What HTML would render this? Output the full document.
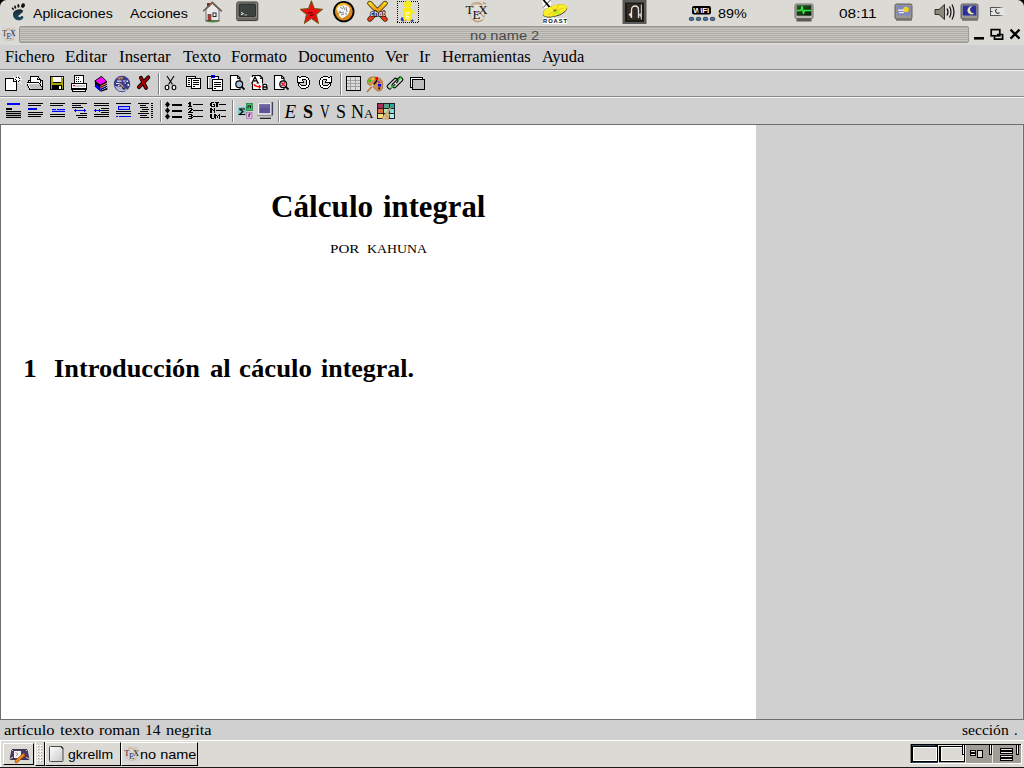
<!DOCTYPE html>
<html><head><meta charset="utf-8">
<style>
*{margin:0;padding:0;box-sizing:border-box}
html,body{width:1024px;height:768px;overflow:hidden;background:#dcdad5;position:relative}
.a{position:absolute}
.sans{font-family:"Liberation Sans",sans-serif}
.serif{font-family:"Liberation Serif",serif}
svg{position:absolute;overflow:visible}
</style></head><body>
<!-- top panel -->
<div id="panel" class="a" style="left:0;top:0;width:1024px;height:25px;background:#dcdad5"></div>






<div class="a" style="left:32.80px;top:-11.00px;font:13px 'Liberation Sans',sans-serif;line-height:50px;white-space:pre;color:#000;transform:scaleX(1.0924);transform-origin:0 0">Aplicaciones</div>
<div class="a" style="left:130.00px;top:-11.00px;font:13px 'Liberation Sans',sans-serif;line-height:50px;white-space:pre;color:#000;transform:scaleX(1.0986);transform-origin:0 0">Acciones</div>
<div class="a" style="left:718.05px;top:-11.00px;font:13px 'Liberation Sans',sans-serif;line-height:50px;white-space:pre;color:#000;transform:scaleX(1.1040);transform-origin:0 0">89%</div>
<div class="a" style="left:839.21px;top:-11.00px;font:13px 'Liberation Sans',sans-serif;line-height:50px;white-space:pre;color:#000;transform:scaleX(1.1869);transform-origin:0 0">08:11</div>
<!-- corners -->
<svg class="a" style="left:0;top:0" width="8" height="8"><path d="M0 0H6.5A6.5 6.5 0 0 0 0 6.5Z" fill="#000"/></svg>
<svg class="a" style="left:1016px;top:0" width="8" height="8"><path d="M8 0H1.5A6.5 6.5 0 0 1 8 6.5Z" fill="#000"/></svg>
<!-- gnome foot -->
<svg class="a" style="left:0;top:0" width="30" height="24">
<defs><linearGradient id="gf" x1="0" y1="0" x2="0" y2="1"><stop offset="0" stop-color="#1f2a30"/><stop offset="1" stop-color="#1c4a62"/></linearGradient></defs>
<g fill="#fff" opacity="0.6" transform="translate(0,0.5)"></g>
<path d="M19.3 9.2C21.6 9 23.4 10 23 11.4C22.6 12.8 19.6 14.2 18.6 15.6C18 16.6 18.8 17.4 20 17C20.9 16.6 21.6 15.9 22.4 16C23.6 16.2 23.6 17.8 22.7 18.7C21.6 19.8 20 20.3 18.5 20.2C15.4 20 13 17.6 13 14.4C13 11.4 15.8 9.4 19.3 9.2Z" fill="url(#gf)"/>
<ellipse cx="12.9" cy="8.7" rx="0.9" ry="1.4" transform="rotate(-35 12.9 8.7)" fill="#111"/>
<ellipse cx="15.2" cy="7.1" rx="0.95" ry="1.6" transform="rotate(-20 15.2 7.1)" fill="#111"/>
<ellipse cx="18.4" cy="5.9" rx="1.05" ry="1.8" transform="rotate(-8 18.4 5.9)" fill="#111"/>
<ellipse cx="23" cy="5.6" rx="1.9" ry="2.3" transform="rotate(30 23 5.6)" fill="#111"/>
</svg>
<!-- house -->
<svg class="a" style="left:200px;top:0" width="26" height="24">
<ellipse cx="212.5" cy="20.8" rx="7.5" ry="1.6" fill="#4f8a3a" transform="translate(-200,0)"/>
<rect x="7" y="3" width="3" height="4" fill="#8a2a20"/>
<path d="M6 9.5L12.3 3.5L19 9.5V20.5H6Z" fill="#e8e8e8" stroke="#555" stroke-width="0.8"/>
<path d="M3.2 11.2L12.3 2.3L21.8 11.3" fill="none" stroke="#6b5a48" stroke-width="1.6"/>
<rect x="8" y="14.5" width="3" height="6" fill="#c03a30" stroke="#333" stroke-width="0.6"/>
<rect x="12.5" y="12.5" width="4" height="4.5" fill="#222"/><rect x="13.5" y="13.5" width="2" height="2.5" fill="#fff"/>
</svg>
<!-- terminal -->
<svg class="a" style="left:236px;top:1px" width="24" height="22">
<rect x="0.8" y="1" width="21" height="18.6" rx="1.5" fill="#8c887f" stroke="#3a3834" stroke-width="1"/>
<rect x="3" y="3" width="16.5" height="12.5" rx="0.8" fill="#3c423e" stroke="#1f221f" stroke-width="0.8"/>
<path d="M5 11.5L7.5 12.7L5 13.8" fill="none" stroke="#eee" stroke-width="1"/>
<path d="M8.5 14H11" stroke="#ddd" stroke-width="0.8"/>
<rect x="2" y="16.5" width="19" height="2.5" fill="#6d6a63"/>
</svg>
<!-- star -->
<svg class="a" style="left:298px;top:0" width="28" height="26">
<path d="M13.4 0.7L16.3 8.6L24.6 9.3L18.3 14.5L20.5 23.5L13.4 18.6L6.3 23.5L8.5 14.5L2 9.3L10.5 8.6Z" fill="#e81010" stroke="#6a5a10" stroke-width="1"/>
<path d="M10 13C11.5 12 13 13.5 14.5 12.5M12 15.5C13.5 15.5 15 14 16 15" stroke="#400" stroke-width="1" fill="none"/>
</svg>
<!-- ball -->
<svg class="a" style="left:332px;top:0" width="24" height="24">
<circle cx="11.8" cy="11.6" r="9.8" fill="#d88818" stroke="#000" stroke-width="1.8"/>
<circle cx="10.8" cy="9.2" r="6.5" fill="#f4c030" opacity="0.8"/>
<path d="M4.5 9L7.5 5.5L10 6L12 4.5L16.5 6.5L18 9L16.5 14L13.5 16.5L10 18.5L7 16L6.5 12.5Z" fill="#f4f4f4"/>
<path d="M8 7L11 9M11 6L13 10M14 7L15 12M7 11L10 13L12 12M9 15L12 14M13 13L15 14.5M6.5 13.5L9 12" stroke="#555" stroke-width="0.7" fill="none"/>
</svg>
<!-- xchat -->
<svg class="a" style="left:366px;top:0" width="26" height="24">
<defs><linearGradient id="xc" x1="0" y1="0" x2="0" y2="1"><stop offset="0" stop-color="#f8d818"/><stop offset="0.55" stop-color="#f08810"/><stop offset="0.56" stop-color="#f05010"/><stop offset="1" stop-color="#e83818"/></linearGradient></defs>
<path d="M3.8 3.3L19.2 19.2M19.2 3.3L3.8 19.2" stroke="#3a2a10" stroke-width="5" stroke-linecap="round"/>
<path d="M3.8 3.3L19.2 19.2M19.2 3.3L3.8 19.2" stroke="url(#xc)" stroke-width="3.4" stroke-linecap="round"/>
<text x="11.8" y="15.6" font-family="Liberation Sans" font-size="6.5" font-weight="bold" text-anchor="middle" fill="#f4f4f4" stroke="#111" stroke-width="1.3" paint-order="stroke" letter-spacing="0.4">chat</text>
</svg>
<!-- gaim dotted -->
<svg class="a" style="left:396px;top:0" width="26" height="25">
<g fill="#000" shape-rendering="crispEdges"><rect x="1" y="1" width="1" height="1"/><rect x="1" y="22" width="1" height="1"/><rect x="3" y="1" width="1" height="1"/><rect x="3" y="22" width="1" height="1"/><rect x="5" y="1" width="1" height="1"/><rect x="5" y="22" width="1" height="1"/><rect x="7" y="1" width="1" height="1"/><rect x="7" y="22" width="1" height="1"/><rect x="9" y="1" width="1" height="1"/><rect x="9" y="22" width="1" height="1"/><rect x="11" y="1" width="1" height="1"/><rect x="11" y="22" width="1" height="1"/><rect x="13" y="1" width="1" height="1"/><rect x="13" y="22" width="1" height="1"/><rect x="15" y="1" width="1" height="1"/><rect x="15" y="22" width="1" height="1"/><rect x="17" y="1" width="1" height="1"/><rect x="17" y="22" width="1" height="1"/><rect x="19" y="1" width="1" height="1"/><rect x="19" y="22" width="1" height="1"/><rect x="21" y="1" width="1" height="1"/><rect x="21" y="22" width="1" height="1"/><rect x="1" y="3" width="1" height="1"/><rect x="22" y="3" width="1" height="1"/><rect x="1" y="5" width="1" height="1"/><rect x="22" y="5" width="1" height="1"/><rect x="1" y="7" width="1" height="1"/><rect x="22" y="7" width="1" height="1"/><rect x="1" y="9" width="1" height="1"/><rect x="22" y="9" width="1" height="1"/><rect x="1" y="11" width="1" height="1"/><rect x="22" y="11" width="1" height="1"/><rect x="1" y="13" width="1" height="1"/><rect x="22" y="13" width="1" height="1"/><rect x="1" y="15" width="1" height="1"/><rect x="22" y="15" width="1" height="1"/><rect x="1" y="17" width="1" height="1"/><rect x="22" y="17" width="1" height="1"/><rect x="1" y="19" width="1" height="1"/><rect x="22" y="19" width="1" height="1"/><rect x="1" y="21" width="1" height="1"/><rect x="22" y="21" width="1" height="1"/></g>
<path d="M5.5 17.5C4 19 4.5 21 7 21.5L10.5 20.5L9 17Z" fill="#2838c8"/>
<path d="M13 20.5L16.5 22L18 20.5L15 18.5Z" fill="#2838c8"/>
<circle cx="11.8" cy="4.3" r="3.6" fill="#f8ec10"/>
<path d="M7.5 8H15.5L16.5 10.5L19.5 12.5L18.5 13.5L16 12.5V19.5L13.5 21.5L11 19.5L8 21.5L7 17Z" fill="#f8ec10"/>
<text x="11.8" y="16.8" font-family="Liberation Serif" font-size="10" text-anchor="middle" fill="#fff">g</text>
</svg>
<!-- tex -->
<svg class="a" style="left:464px;top:0" width="28" height="25">
<ellipse cx="13.5" cy="13" rx="7.5" ry="9" fill="#e4e0dc" stroke="#b8b0a8" stroke-width="0.8"/>
<path d="M7 5C10 2 15 2 18 4.5M19 2.5L22 4M9 19C11 22 16 22.5 19 19.5M17 14L20 17" stroke="#c8a078" stroke-width="1.4" fill="none"/>
<text x="1.5" y="13.5" font-family="Liberation Serif" font-size="13" fill="#111">T</text>
<text x="8.5" y="18.5" font-family="Liberation Serif" font-size="13" fill="#111">E</text>
<text x="14.2" y="13.5" font-family="Liberation Serif" font-size="13" fill="#111">X</text>
<rect x="12" y="11" width="2" height="2" fill="#8a80e0"/>
</svg>
<!-- xroast -->
<svg class="a" style="left:538px;top:0" width="34" height="26">
<rect x="4.7" y="0" width="8.3" height="8" fill="#fff"/>
<path d="M5.5 0L12 7.6" stroke="#000" stroke-width="1.8"/>
<path d="M5 7.6L12.6 0" stroke="#000" stroke-width="0.8"/>
<ellipse cx="17" cy="11" rx="12.6" ry="5.6" transform="rotate(-17 17 11)" fill="#2a2a30"/>
<ellipse cx="17" cy="10.5" rx="12.4" ry="5.3" transform="rotate(-17 17 10.5)" fill="#f8f028"/>
<path d="M17 10.5L12 5.5M17 10.5L21 4.5M17 10.5L26 8M17 10.5L10 14.5M17 10.5L15 16M17 10.5L24 14" stroke="#f0b818" stroke-width="1" opacity="0.8"/>
<ellipse cx="19.5" cy="12.5" rx="3" ry="2" fill="#c8f020"/>
<ellipse cx="17" cy="10.5" rx="1.6" ry="0.9" fill="#707040"/>
<rect x="5" y="18" width="24" height="6" fill="#fff"/>
<text x="17.5" y="23.2" font-family="Liberation Sans" font-size="5.8" font-weight="bold" text-anchor="middle" fill="#111" letter-spacing="0.9">ROAST</text>
</svg>
<!-- dark square app -->
<svg class="a" style="left:622px;top:0" width="26" height="25">
<rect x="0.5" y="0" width="24" height="24" fill="#5a5a5a"/>
<rect x="3" y="2.5" width="19" height="19.5" fill="#1e1a14"/>
<rect x="5" y="4" width="15" height="16" fill="#3a3028" opacity="0.7"/>
<path d="M6.5 14.5L9.5 12V18Z" fill="#ddd"/>
<path d="M9.5 18V10C9.5 7 11 6 13 6C15 6 16.5 7 16.5 10V18" fill="none" stroke="#e0e0e0" stroke-width="1.3"/>
<path d="M16.5 14.5L19.5 13V18" fill="#ccc"/>
<rect x="18.8" y="4.5" width="1.2" height="15" fill="#bbb"/>
</svg>
<!-- wifi -->
<svg class="a" style="left:688px;top:4px" width="30" height="18">
<rect x="4" y="2" width="19" height="8.6" rx="2" fill="#000"/>
<text x="5.2" y="9.3" font-family="Liberation Sans" font-size="8" font-weight="bold" fill="#fff" letter-spacing="-0.3">WiFi</text>
<rect x="10.5" y="3" width="2" height="6.5" fill="#000"/>
<g fill="#4a7aa8" stroke="#1a2a3a" stroke-width="0.8"><rect x="1.4" y="13.4" width="4.2" height="3" rx="1"/><rect x="8.4" y="13.4" width="4.2" height="3" rx="1"/><rect x="15.4" y="13.4" width="4.2" height="3" rx="1"/><rect x="22.4" y="13.4" width="4.2" height="3" rx="1"/></g>
</svg>
<!-- sysmon -->
<svg class="a" style="left:794px;top:3px" width="22" height="20">
<defs><linearGradient id="smg" x1="0" y1="0" x2="1" y2="1"><stop offset="0" stop-color="#2a5a2a"/><stop offset="1" stop-color="#0a1a0a"/></linearGradient></defs>
<rect x="1" y="1" width="18" height="14.5" rx="1.5" fill="#b8b6ae" stroke="#555" stroke-width="0.8"/>
<rect x="2.6" y="2.2" width="14.8" height="10.5" fill="url(#smg)"/>
<path d="M2.8 7.5H7L8.2 3L9.4 11L10.5 7.5H17.3" stroke="#30f040" stroke-width="1.3" fill="none"/>
<rect x="2.5" y="15.5" width="15" height="3" fill="#5a5854"/>
</svg>
<!-- weather monitor -->
<svg class="a" style="left:894px;top:3px" width="22" height="20">
<rect x="1" y="1" width="17" height="15" rx="1.5" fill="#9a9890" stroke="#444" stroke-width="0.8"/>
<rect x="2.8" y="2.5" width="13.5" height="10" fill="#8088c0"/>
<circle cx="12" cy="6.5" r="2.8" fill="#f0d020"/>
<rect x="4" y="6.5" width="6" height="1.4" fill="#eee"/><rect x="5" y="9" width="5" height="1.2" fill="#eee"/>
<rect x="2" y="16" width="16" height="2" fill="#555" opacity="0.6"/>
</svg>
<!-- speaker -->
<svg class="a" style="left:933px;top:2px" width="24" height="20">
<path d="M2 7.5H6L11.5 2.5V17.5L6 12.5H2Z" fill="#8a8878" stroke="#222" stroke-width="0.9"/>
<path d="M14 6.5Q16 10 14 13.5M16.5 4.5Q19.5 10 16.5 15.5M19 2.5Q23 10 19 17.5" fill="none" stroke="#111" stroke-width="1.2"/>
</svg>
<!-- moon monitor -->
<svg class="a" style="left:960px;top:3px" width="22" height="20">
<rect x="1" y="1" width="17" height="15" rx="1.5" fill="#9a9890" stroke="#444" stroke-width="0.8"/>
<rect x="2.8" y="2.5" width="13.5" height="10" fill="#2a30a0"/>
<path d="M12.5 3.5A4 4 0 1 0 14.5 10A3.2 3.2 0 1 1 12.5 3.5Z" fill="#f0e8a0"/>
<rect x="2" y="16" width="16" height="2" fill="#555" opacity="0.6"/>
</svg>
<!-- tray small -->
<svg class="a" style="left:990px;top:7px" width="16" height="10">
<defs><linearGradient id="trf" x1="0" y1="0" x2="1" y2="0"><stop offset="0.6" stop-color="#555"/><stop offset="1" stop-color="#555" stop-opacity="0"/></linearGradient></defs>
<rect x="0" y="0" width="14.5" height="9" fill="#e4e4e4"/>
<rect x="0" y="0" width="14.5" height="1" fill="url(#trf)"/><rect x="0" y="8" width="14.5" height="1" fill="url(#trf)"/><rect x="0" y="0" width="1" height="9" fill="#555"/>
<path d="M1 4.5H2.5" stroke="#444" stroke-width="1"/>
<path d="M7 2.2C5.5 2.5 5 4 6 5C6.5 6 7.5 6.8 8.5 6.2L9.5 5.5" stroke="#4a4038" stroke-width="1.1" fill="none"/>
</svg>
<!-- title bar -->
<div id="stripes" class="a" style="left:19px;top:26px;width:950px;height:17px;border:1px solid #9c9991;border-radius:2px;background:repeating-linear-gradient(to bottom,#adaba5 0,#adaba5 1px,#c8c6c0 1px,#c8c6c0 2px)"></div>



<svg class="a" style="left:2px;top:27px" width="15" height="15">
<rect x="0" y="0" width="14" height="14" fill="#d6d6d8"/>
<ellipse cx="7" cy="8" rx="5" ry="5.5" fill="none" stroke="#c0b0a0" stroke-width="1" opacity="0.7"/>
<path d="M4 2.5C6 1.5 8 2 9.5 3M10.5 1.5L12.5 3M8.5 12C9.5 13 11 12.5 11.5 11" stroke="#d8b898" stroke-width="1.3" fill="none"/>
<text x="0.3" y="8.8" font-family="Liberation Serif" font-size="7.5" fill="#333">T</text>
<text x="4.6" y="11.6" font-family="Liberation Serif" font-size="7.5" fill="#333">E</text>
<text x="8.2" y="8.8" font-family="Liberation Serif" font-size="7.5" fill="#222">X</text>
<rect x="7.5" y="7.5" width="2" height="1.5" fill="#a8a0f0"/>
</svg>
<svg class="a" style="left:970px;top:26px" width="54" height="18">
<rect x="4" y="11" width="10" height="2.6" fill="#000"/>
<rect x="21.2" y="3.6" width="8.6" height="6.2" fill="none" stroke="#000" stroke-width="1.7"/>
<path d="M27 8.5H32.6V13.2H24.5V10" fill="none" stroke="#000" stroke-width="1.7"/>
<path d="M40.5 3.6L49.5 12.6M49.5 3.6L40.5 12.6" stroke="#000" stroke-width="2.2"/>
</svg>

<div class="a" style="left:469.62px;top:11.00px;font:12.5px 'Liberation Sans',sans-serif;line-height:50px;white-space:pre;color:#4a4a4a;transform:scaleX(1.1723);transform-origin:0 0">no name 2</div>
<!-- texmacs window -->
<div id="menu" class="a" style="left:0;top:45px;width:1024px;height:80px;background:#d0d0d0"></div>
<div class="a" style="left:0;top:69px;width:1024px;height:1px;background:#8a8a8a"></div>
<div class="a" style="left:0;top:70px;width:1024px;height:1px;background:#f4f4f4"></div>
<div class="a" style="left:0;top:96px;width:1024px;height:1px;background:#8a8a8a"></div>
<div class="a" style="left:0;top:97px;width:1024px;height:1px;background:#f4f4f4"></div>
<div class="a" style="left:0;top:124px;width:1024px;height:1px;background:#6e6e6e"></div>


<!-- toolbar1 separators -->
<div class="a" style="left:158px;top:73px;width:1px;height:22px;background:#808080"></div>
<div class="a" style="left:159px;top:73px;width:1px;height:22px;background:#fff"></div>
<div class="a" style="left:340px;top:73px;width:1px;height:22px;background:#808080"></div>
<div class="a" style="left:341px;top:73px;width:1px;height:22px;background:#fff"></div>
<!-- new -->
<svg class="a" style="left:4px;top:74px" width="20" height="18" shape-rendering="crispEdges"><rect x="13" y="1" width="1" height="1" fill="#fff"/><rect x="9" y="2" width="1" height="1" fill="#fff"/><rect x="13" y="2" width="1" height="1" fill="#fff"/><rect x="16" y="2" width="1" height="1" fill="#fff"/><rect x="10" y="3" width="1" height="1" fill="#fff"/><rect x="12" y="3" width="1" height="1" fill="#000"/><rect x="13" y="3" width="1" height="1" fill="#fff"/><rect x="14" y="3" width="1" height="1" fill="#000"/><rect x="16" y="3" width="1" height="1" fill="#fff"/><rect x="1" y="4" width="1" height="1" fill="#000"/><rect x="2" y="4" width="1" height="1" fill="#000"/><rect x="3" y="4" width="1" height="1" fill="#000"/><rect x="4" y="4" width="1" height="1" fill="#000"/><rect x="5" y="4" width="1" height="1" fill="#000"/><rect x="6" y="4" width="1" height="1" fill="#000"/><rect x="7" y="4" width="1" height="1" fill="#000"/><rect x="8" y="4" width="1" height="1" fill="#000"/><rect x="9" y="4" width="1" height="1" fill="#000"/><rect x="11" y="4" width="1" height="1" fill="#fff"/><rect x="12" y="4" width="1" height="1" fill="#fff"/><rect x="13" y="4" width="1" height="1" fill="#fff"/><rect x="14" y="4" width="1" height="1" fill="#fff"/><rect x="15" y="4" width="1" height="1" fill="#000"/><rect x="1" y="5" width="1" height="1" fill="#000"/><rect x="2" y="5" width="1" height="1" fill="#fff"/><rect x="3" y="5" width="1" height="1" fill="#fff"/><rect x="4" y="5" width="1" height="1" fill="#fff"/><rect x="5" y="5" width="1" height="1" fill="#fff"/><rect x="6" y="5" width="1" height="1" fill="#fff"/><rect x="7" y="5" width="1" height="1" fill="#fff"/><rect x="8" y="5" width="1" height="1" fill="#fff"/><rect x="9" y="5" width="1" height="1" fill="#000"/><rect x="10" y="5" width="1" height="1" fill="#fff"/><rect x="11" y="5" width="1" height="1" fill="#000"/><rect x="12" y="5" width="1" height="1" fill="#fff"/><rect x="13" y="5" width="1" height="1" fill="#fff"/><rect x="14" y="5" width="1" height="1" fill="#fff"/><rect x="15" y="5" width="1" height="1" fill="#fff"/><rect x="16" y="5" width="1" height="1" fill="#fff"/><rect x="17" y="5" width="1" height="1" fill="#fff"/><rect x="1" y="6" width="1" height="1" fill="#000"/><rect x="2" y="6" width="1" height="1" fill="#fff"/><rect x="3" y="6" width="1" height="1" fill="#fff"/><rect x="4" y="6" width="1" height="1" fill="#fff"/><rect x="5" y="6" width="1" height="1" fill="#fff"/><rect x="6" y="6" width="1" height="1" fill="#fff"/><rect x="7" y="6" width="1" height="1" fill="#fff"/><rect x="8" y="6" width="1" height="1" fill="#fff"/><rect x="9" y="6" width="1" height="1" fill="#000"/><rect x="10" y="6" width="1" height="1" fill="#fff"/><rect x="11" y="6" width="1" height="1" fill="#fff"/><rect x="12" y="6" width="1" height="1" fill="#000"/><rect x="13" y="6" width="1" height="1" fill="#fff"/><rect x="14" y="6" width="1" height="1" fill="#fff"/><rect x="15" y="6" width="1" height="1" fill="#000"/><rect x="1" y="7" width="1" height="1" fill="#000"/><rect x="2" y="7" width="1" height="1" fill="#fff"/><rect x="3" y="7" width="1" height="1" fill="#fff"/><rect x="4" y="7" width="1" height="1" fill="#fff"/><rect x="5" y="7" width="1" height="1" fill="#fff"/><rect x="6" y="7" width="1" height="1" fill="#fff"/><rect x="7" y="7" width="1" height="1" fill="#fff"/><rect x="8" y="7" width="1" height="1" fill="#fff"/><rect x="9" y="7" width="1" height="1" fill="#000"/><rect x="10" y="7" width="1" height="1" fill="#000"/><rect x="11" y="7" width="1" height="1" fill="#000"/><rect x="12" y="7" width="1" height="1" fill="#000"/><rect x="13" y="7" width="1" height="1" fill="#fff"/><rect x="14" y="7" width="1" height="1" fill="#000"/><rect x="15" y="7" width="1" height="1" fill="#fff"/><rect x="1" y="8" width="1" height="1" fill="#000"/><rect x="2" y="8" width="1" height="1" fill="#fff"/><rect x="3" y="8" width="1" height="1" fill="#fff"/><rect x="4" y="8" width="1" height="1" fill="#fff"/><rect x="5" y="8" width="1" height="1" fill="#fff"/><rect x="6" y="8" width="1" height="1" fill="#fff"/><rect x="7" y="8" width="1" height="1" fill="#fff"/><rect x="8" y="8" width="1" height="1" fill="#fff"/><rect x="9" y="8" width="1" height="1" fill="#fff"/><rect x="10" y="8" width="1" height="1" fill="#fff"/><rect x="11" y="8" width="1" height="1" fill="#fff"/><rect x="12" y="8" width="1" height="1" fill="#000"/><rect x="13" y="8" width="1" height="1" fill="#fff"/><rect x="16" y="8" width="1" height="1" fill="#fff"/><rect x="1" y="9" width="1" height="1" fill="#000"/><rect x="2" y="9" width="1" height="1" fill="#fff"/><rect x="3" y="9" width="1" height="1" fill="#fff"/><rect x="4" y="9" width="1" height="1" fill="#fff"/><rect x="5" y="9" width="1" height="1" fill="#fff"/><rect x="6" y="9" width="1" height="1" fill="#fff"/><rect x="7" y="9" width="1" height="1" fill="#fff"/><rect x="8" y="9" width="1" height="1" fill="#fff"/><rect x="9" y="9" width="1" height="1" fill="#fff"/><rect x="10" y="9" width="1" height="1" fill="#fff"/><rect x="11" y="9" width="1" height="1" fill="#fff"/><rect x="12" y="9" width="1" height="1" fill="#000"/><rect x="17" y="9" width="1" height="1" fill="#fff"/><rect x="1" y="10" width="1" height="1" fill="#000"/><rect x="2" y="10" width="1" height="1" fill="#fff"/><rect x="3" y="10" width="1" height="1" fill="#fff"/><rect x="4" y="10" width="1" height="1" fill="#fff"/><rect x="5" y="10" width="1" height="1" fill="#fff"/><rect x="6" y="10" width="1" height="1" fill="#fff"/><rect x="7" y="10" width="1" height="1" fill="#fff"/><rect x="8" y="10" width="1" height="1" fill="#fff"/><rect x="9" y="10" width="1" height="1" fill="#fff"/><rect x="10" y="10" width="1" height="1" fill="#fff"/><rect x="11" y="10" width="1" height="1" fill="#fff"/><rect x="12" y="10" width="1" height="1" fill="#000"/><rect x="1" y="11" width="1" height="1" fill="#000"/><rect x="2" y="11" width="1" height="1" fill="#fff"/><rect x="3" y="11" width="1" height="1" fill="#fff"/><rect x="4" y="11" width="1" height="1" fill="#fff"/><rect x="5" y="11" width="1" height="1" fill="#fff"/><rect x="6" y="11" width="1" height="1" fill="#fff"/><rect x="7" y="11" width="1" height="1" fill="#fff"/><rect x="8" y="11" width="1" height="1" fill="#fff"/><rect x="9" y="11" width="1" height="1" fill="#fff"/><rect x="10" y="11" width="1" height="1" fill="#fff"/><rect x="11" y="11" width="1" height="1" fill="#fff"/><rect x="12" y="11" width="1" height="1" fill="#000"/><rect x="1" y="12" width="1" height="1" fill="#000"/><rect x="2" y="12" width="1" height="1" fill="#fff"/><rect x="3" y="12" width="1" height="1" fill="#fff"/><rect x="4" y="12" width="1" height="1" fill="#fff"/><rect x="5" y="12" width="1" height="1" fill="#fff"/><rect x="6" y="12" width="1" height="1" fill="#fff"/><rect x="7" y="12" width="1" height="1" fill="#fff"/><rect x="8" y="12" width="1" height="1" fill="#fff"/><rect x="9" y="12" width="1" height="1" fill="#fff"/><rect x="10" y="12" width="1" height="1" fill="#fff"/><rect x="11" y="12" width="1" height="1" fill="#fff"/><rect x="12" y="12" width="1" height="1" fill="#000"/><rect x="1" y="13" width="1" height="1" fill="#000"/><rect x="2" y="13" width="1" height="1" fill="#fff"/><rect x="3" y="13" width="1" height="1" fill="#fff"/><rect x="4" y="13" width="1" height="1" fill="#fff"/><rect x="5" y="13" width="1" height="1" fill="#fff"/><rect x="6" y="13" width="1" height="1" fill="#fff"/><rect x="7" y="13" width="1" height="1" fill="#fff"/><rect x="8" y="13" width="1" height="1" fill="#fff"/><rect x="9" y="13" width="1" height="1" fill="#fff"/><rect x="10" y="13" width="1" height="1" fill="#fff"/><rect x="11" y="13" width="1" height="1" fill="#fff"/><rect x="12" y="13" width="1" height="1" fill="#000"/><rect x="1" y="14" width="1" height="1" fill="#000"/><rect x="2" y="14" width="1" height="1" fill="#fff"/><rect x="3" y="14" width="1" height="1" fill="#fff"/><rect x="4" y="14" width="1" height="1" fill="#fff"/><rect x="5" y="14" width="1" height="1" fill="#fff"/><rect x="6" y="14" width="1" height="1" fill="#fff"/><rect x="7" y="14" width="1" height="1" fill="#fff"/><rect x="8" y="14" width="1" height="1" fill="#fff"/><rect x="9" y="14" width="1" height="1" fill="#fff"/><rect x="10" y="14" width="1" height="1" fill="#fff"/><rect x="11" y="14" width="1" height="1" fill="#fff"/><rect x="12" y="14" width="1" height="1" fill="#000"/><rect x="1" y="15" width="1" height="1" fill="#000"/><rect x="2" y="15" width="1" height="1" fill="#fff"/><rect x="3" y="15" width="1" height="1" fill="#fff"/><rect x="4" y="15" width="1" height="1" fill="#fff"/><rect x="5" y="15" width="1" height="1" fill="#fff"/><rect x="6" y="15" width="1" height="1" fill="#fff"/><rect x="7" y="15" width="1" height="1" fill="#fff"/><rect x="8" y="15" width="1" height="1" fill="#fff"/><rect x="9" y="15" width="1" height="1" fill="#fff"/><rect x="10" y="15" width="1" height="1" fill="#fff"/><rect x="11" y="15" width="1" height="1" fill="#fff"/><rect x="12" y="15" width="1" height="1" fill="#000"/><rect x="1" y="16" width="1" height="1" fill="#000"/><rect x="2" y="16" width="1" height="1" fill="#000"/><rect x="3" y="16" width="1" height="1" fill="#000"/><rect x="4" y="16" width="1" height="1" fill="#000"/><rect x="5" y="16" width="1" height="1" fill="#000"/><rect x="6" y="16" width="1" height="1" fill="#000"/><rect x="7" y="16" width="1" height="1" fill="#000"/><rect x="8" y="16" width="1" height="1" fill="#000"/><rect x="9" y="16" width="1" height="1" fill="#000"/><rect x="10" y="16" width="1" height="1" fill="#000"/><rect x="11" y="16" width="1" height="1" fill="#000"/><rect x="12" y="16" width="1" height="1" fill="#000"/></svg>
<!-- open -->
<svg class="a" style="left:25px;top:74px" width="20" height="18" shape-rendering="crispEdges"><rect x="5" y="2" width="9" height="1" fill="#000"/><rect x="5" y="3" width="1" height="1" fill="#000"/><rect x="6" y="3" width="7" height="1" fill="#fff"/><rect x="13" y="3" width="1" height="1" fill="#000"/><rect x="5" y="4" width="1" height="1" fill="#000"/><rect x="6" y="4" width="6" height="1" fill="#fff"/><rect x="12" y="4" width="1" height="1" fill="#000"/><rect x="13" y="4" width="1" height="1" fill="#fff"/><rect x="14" y="4" width="1" height="1" fill="#000"/><rect x="5" y="5" width="1" height="1" fill="#000"/><rect x="6" y="5" width="6" height="1" fill="#fff"/><rect x="12" y="5" width="4" height="1" fill="#000"/><rect x="3" y="6" width="3" height="1" fill="#000"/><rect x="6" y="6" width="9" height="1" fill="#fff"/><rect x="15" y="6" width="3" height="1" fill="#000"/><rect x="3" y="7" width="1" height="1" fill="#000"/><rect x="4" y="7" width="1" height="1" fill="#fff"/><rect x="5" y="7" width="1" height="1" fill="#000"/><rect x="6" y="7" width="9" height="1" fill="#fff"/><rect x="15" y="7" width="1" height="1" fill="#000"/><rect x="16" y="7" width="1" height="1" fill="#fff"/><rect x="17" y="7" width="1" height="1" fill="#000"/><rect x="2" y="8" width="12" height="1" fill="#000"/><rect x="14" y="8" width="1" height="1" fill="#fff"/><rect x="15" y="8" width="1" height="1" fill="#000"/><rect x="16" y="8" width="1" height="1" fill="#fff"/><rect x="17" y="8" width="1" height="1" fill="#000"/><rect x="2" y="9" width="12" height="1" fill="#fff"/><rect x="14" y="9" width="1" height="1" fill="#000"/><rect x="15" y="9" width="1" height="1" fill="#c0c0c0"/><rect x="16" y="9" width="1" height="1" fill="#fff"/><rect x="17" y="9" width="1" height="1" fill="#000"/><rect x="2" y="10" width="1" height="1" fill="#000"/><rect x="3" y="10" width="1" height="1" fill="#fff"/><rect x="4" y="10" width="11" height="1" fill="#c0c0c0"/><rect x="15" y="10" width="1" height="1" fill="#000"/><rect x="16" y="10" width="1" height="1" fill="#fff"/><rect x="17" y="10" width="1" height="1" fill="#000"/><rect x="2" y="11" width="1" height="1" fill="#000"/><rect x="3" y="11" width="1" height="1" fill="#fff"/><rect x="4" y="11" width="11" height="1" fill="#c0c0c0"/><rect x="15" y="11" width="1" height="1" fill="#000"/><rect x="16" y="11" width="1" height="1" fill="#fff"/><rect x="17" y="11" width="1" height="1" fill="#000"/><rect x="3" y="12" width="1" height="1" fill="#000"/><rect x="4" y="12" width="1" height="1" fill="#fff"/><rect x="5" y="12" width="11" height="1" fill="#c0c0c0"/><rect x="16" y="12" width="2" height="1" fill="#000"/><rect x="3" y="13" width="1" height="1" fill="#000"/><rect x="4" y="13" width="1" height="1" fill="#fff"/><rect x="5" y="13" width="11" height="1" fill="#c0c0c0"/><rect x="16" y="13" width="1" height="1" fill="#c0c0c0"/><rect x="17" y="13" width="1" height="1" fill="#000"/><rect x="4" y="14" width="1" height="1" fill="#000"/><rect x="5" y="14" width="1" height="1" fill="#fff"/><rect x="6" y="14" width="11" height="1" fill="#c0c0c0"/><rect x="17" y="14" width="1" height="1" fill="#000"/><rect x="4" y="15" width="14" height="1" fill="#000"/></svg>
<!-- save -->
<svg class="a" style="left:49px;top:75px" width="17" height="17" shape-rendering="crispEdges">
<rect x="1" y="1" width="14" height="14" fill="#000"/>
<rect x="2" y="2" width="12" height="12" fill="#a8a400"/>
<rect x="4" y="1" width="8" height="7" fill="#000"/>
<rect x="4" y="2" width="8" height="5" fill="#fff"/>
<rect x="3" y="10" width="10" height="5" fill="#000"/>
<rect x="10" y="11" width="2" height="3" fill="#fff"/>
<rect x="13" y="2" width="1" height="1" fill="#fff"/>
</svg>
<!-- print -->
<svg class="a" style="left:70px;top:74px" width="19" height="18" shape-rendering="crispEdges">
<rect x="4" y="1" width="10" height="9" fill="#000"/>
<rect x="5" y="2" width="8" height="8" fill="#fff"/>
<g fill="#000"><rect x="6" y="3" width="1" height="1"/><rect x="8" y="3" width="1" height="1"/><rect x="6" y="5" width="1" height="1"/><rect x="8" y="5" width="1" height="1"/><rect x="6" y="7" width="1" height="1"/><rect x="8" y="7" width="1" height="1"/><rect x="10" y="7" width="1" height="1"/></g>
<rect x="1" y="9" width="16" height="7" fill="#000"/>
<rect x="2" y="10" width="14" height="4" fill="#fff"/>
<rect x="3" y="11" width="12" height="2" fill="#c8c8c8"/>
<rect x="3" y="11" width="2" height="1" fill="#f00"/>
<rect x="2" y="16" width="14" height="2" fill="#000"/>
<rect x="3" y="16" width="12" height="1" fill="#fff"/>
</svg>
<!-- books -->
<svg class="a" style="left:92px;top:74px" width="20" height="20">
<path d="M2.8 7L9.5 2.3L14.8 7.6L8.2 11Z" fill="#ff00ff" stroke="#000" stroke-width="1"/>
<path d="M2.8 7L8.2 11L8.6 17.8L3.2 12.5Z" fill="#000"/>
<path d="M3.6 12L8.4 15.8L8.6 17.6L3.8 13.4Z" fill="#0000ff"/>
<path d="M3.4 11.5L8.4 15.2" stroke="#0000ff" stroke-width="2.4"/>
<path d="M4.5 7.5L6.5 9.2" stroke="#707070" stroke-width="0.8" stroke-dasharray="0.8 0.8"/>
<path d="M8.2 11L14.8 7.6L15.4 15.6L9 17.8Z" fill="#000"/>
<path d="M8.6 12.3L15 9.2M8.8 14.2L15.1 11.2M8.9 16.1L15.2 13.2" stroke="#d8e8e8" stroke-width="0.9"/>
<g fill="#f00"><rect x="12.8" y="9.6" width="1.6" height="1.4"/><rect x="10.5" y="10.8" width="1.6" height="1.4"/><rect x="8.3" y="12.6" width="1.6" height="1.4"/><rect x="9" y="11.8" width="1.2" height="1"/></g>
<g fill="#0000ff"><rect x="12.6" y="12.8" width="1.5" height="1.3"/><rect x="10.4" y="13.8" width="1.5" height="1.3"/><rect x="9" y="15" width="1.2" height="1.2"/></g>
</svg>
<!-- globe -->
<svg class="a" style="left:112px;top:74px" width="20" height="20">
<circle cx="10" cy="10" r="8.2" fill="#3c3c8c"/>
<path d="M3 12C4 15 7 18 10 18.2C13 18 15 17 16 15.5C14 15 12 14 10 13C8 12 6 13 3 12Z" fill="#c8ccd8" opacity="0.85"/>
<path d="M5 4.5C7 3 9 3 11.5 3.2L10 5.5L8 6Z" fill="#d08850" opacity="0.9"/>
<path d="M5 6.5H9.5V7.8H5ZM11 6.5H13.5V7.5H11ZM14.5 6.5H16V8H14.5ZM4 9H8V10H4ZM12.5 8.5H14V9.5H12.5ZM6 11H7.5V12H6ZM15.5 10H17V12H15.5Z" fill="#e8e8f0"/>
<path d="M7 9.5L9.5 10.5L10.5 12.5L12 13.5" stroke="#e0a070" stroke-width="1.1" fill="none"/>
<path d="M8.5 5L9 5.5M10 13.5L13 15.5" stroke="#111" stroke-width="1.1"/>
<path d="M7 17.5H13" stroke="#5060b0" stroke-width="1"/>
</svg>
<!-- X -->
<svg class="a" style="left:135px;top:74px" width="18" height="18">
<path d="M5.9 3.7L11 13.9M13.3 3.3L3.9 13.2" stroke="#000" stroke-width="3.9" stroke-linecap="round"/>
<path d="M5.9 3.7L11 13.9M13.3 3.3L3.9 13.2" stroke="#b00000" stroke-width="2.0" stroke-linecap="round"/>
</svg>
<!-- scissors -->
<svg class="a" style="left:164px;top:75px" width="14" height="16">
<path d="M3 1L8.5 9.5M10 1L4.5 9.5" stroke="#000" stroke-width="1.1"/>
<ellipse cx="3" cy="12.5" rx="1.8" ry="2.2" fill="#fff" stroke="#000" stroke-width="1.1"/>
<ellipse cx="10" cy="12.5" rx="1.8" ry="2.2" fill="#fff" stroke="#000" stroke-width="1.1"/>
</svg>
<!-- copy -->
<svg class="a" style="left:185px;top:75px" width="17" height="16" shape-rendering="crispEdges">
<rect x="1" y="1" width="10" height="11" fill="#000"/><rect x="2" y="2" width="8" height="9" fill="#fff"/>
<g fill="#000"><rect x="3" y="3" width="6" height="1"/><rect x="3" y="5" width="2" height="1"/><rect x="3" y="7" width="2" height="1"/><rect x="3" y="9" width="2" height="1"/></g>
<rect x="6" y="3" width="10" height="11" fill="#000"/><rect x="7" y="4" width="8" height="9" fill="#fff"/>
<g fill="#000"><rect x="8" y="5" width="6" height="1"/><rect x="8" y="7" width="6" height="1"/><rect x="8" y="9" width="6" height="1"/><rect x="8" y="11" width="2" height="1"/></g>
</svg>
<!-- paste -->
<svg class="a" style="left:206px;top:74px" width="18" height="18" shape-rendering="crispEdges">
<rect x="1" y="2" width="12" height="13" fill="#000"/><rect x="2" y="3" width="10" height="11" fill="#fff"/>
<rect x="3" y="4" width="3" height="10" fill="#b8b8b8"/>
<rect x="5" y="1" width="4" height="3" fill="#0000ff"/><rect x="6" y="2" width="2" height="1" fill="#000"/>
<rect x="6" y="5" width="11" height="12" fill="#000"/><rect x="7" y="6" width="9" height="10" fill="#fff"/>
<g fill="#000"><rect x="8" y="8" width="7" height="1"/><rect x="8" y="10" width="7" height="1"/><rect x="8" y="12" width="7" height="1"/><rect x="8" y="14" width="2" height="1"/></g>
</svg>
<!-- find -->
<svg class="a" style="left:229px;top:74px" width="18" height="18">
<path d="M1.5 1.5H8.5L11 4V15.5H1.5Z" fill="#fff" stroke="#000" stroke-width="1.1"/>
<path d="M8.5 1.5V4.5H11" fill="none" stroke="#000" stroke-width="0.9"/>
<circle cx="10.2" cy="10.3" r="3.4" fill="#a8c0e0" stroke="#000" stroke-width="1.2"/>
<path d="M12.6 12.7L15.5 15.5" stroke="#000" stroke-width="1.8"/>
</svg>
<!-- replace -->
<svg class="a" style="left:250px;top:74px" width="19" height="18">
<path d="M2.5 1.5H10L12.5 4V15.5H2.5Z" fill="#fff" stroke="#000" stroke-width="1.1"/>
<path d="M10 1.5V4.5H12.5" fill="none" stroke="#000" stroke-width="0.9"/>
<rect x="0" y="3" width="10" height="6.5" fill="#fff"/>
<path d="M0.8 9H3.2M6.6 9H9.2M2 9L5 2.8L8 9M3 6.8H7" stroke="#000" stroke-width="1.2" fill="none"/>
<path d="M4 10.3C5 12 6.5 12.8 9 12.8" stroke="#f00" stroke-width="1.5" fill="none"/>
<path d="M8.8 10.4L11.4 12.8L8.8 15.2Z" fill="#f00"/>
<rect x="11" y="9.5" width="7" height="6.5" fill="#fff"/>
<path d="M12.5 10.3H15.5Q17 10.3 17 12Q17 13 15.8 13H12.5M15.8 13Q17.3 13 17.3 14.2Q17.3 15.4 15.8 15.4H12.5M13 10.3V15.4" stroke="#000" stroke-width="1.3" fill="none"/>
</svg>
<!-- find stop -->
<svg class="a" style="left:273px;top:74px" width="18" height="18">
<path d="M1.5 1.5H8.5L11 4V15.5H1.5Z" fill="#fff" stroke="#000" stroke-width="1.1"/>
<path d="M8.5 1.5V4.5H11" fill="none" stroke="#000" stroke-width="0.9"/>
<circle cx="10.2" cy="10.3" r="3.4" fill="#b0d8f0" stroke="#000" stroke-width="1.2"/>
<path d="M8.4 8.5L12 12.1M12 8.5L8.4 12.1" stroke="#f00" stroke-width="1.1"/>
<path d="M12.6 12.7L15.5 15.5" stroke="#000" stroke-width="1.8"/>
</svg>
<!-- undo -->
<svg class="a" style="left:296px;top:75px" width="16" height="16" shape-rendering="crispEdges"><rect x="1" y="1" width="1" height="1" fill="#000"/><rect x="2" y="1" width="1" height="1" fill="#000"/><rect x="5" y="1" width="1" height="1" fill="#000"/><rect x="6" y="1" width="1" height="1" fill="#000"/><rect x="7" y="1" width="1" height="1" fill="#000"/><rect x="8" y="1" width="1" height="1" fill="#000"/><rect x="9" y="1" width="1" height="1" fill="#000"/><rect x="1" y="2" width="1" height="1" fill="#000"/><rect x="2" y="2" width="1" height="1" fill="#fff"/><rect x="3" y="2" width="1" height="1" fill="#000"/><rect x="4" y="2" width="1" height="1" fill="#000"/><rect x="5" y="2" width="1" height="1" fill="#fff"/><rect x="6" y="2" width="1" height="1" fill="#fff"/><rect x="7" y="2" width="1" height="1" fill="#fff"/><rect x="8" y="2" width="1" height="1" fill="#fff"/><rect x="9" y="2" width="1" height="1" fill="#fff"/><rect x="10" y="2" width="1" height="1" fill="#000"/><rect x="11" y="2" width="1" height="1" fill="#000"/><rect x="1" y="3" width="1" height="1" fill="#000"/><rect x="2" y="3" width="1" height="1" fill="#fff"/><rect x="3" y="3" width="1" height="1" fill="#fff"/><rect x="4" y="3" width="1" height="1" fill="#fff"/><rect x="5" y="3" width="1" height="1" fill="#fff"/><rect x="6" y="3" width="1" height="1" fill="#fff"/><rect x="7" y="3" width="1" height="1" fill="#fff"/><rect x="8" y="3" width="1" height="1" fill="#fff"/><rect x="9" y="3" width="1" height="1" fill="#fff"/><rect x="10" y="3" width="1" height="1" fill="#fff"/><rect x="11" y="3" width="1" height="1" fill="#fff"/><rect x="12" y="3" width="1" height="1" fill="#000"/><rect x="1" y="4" width="1" height="1" fill="#000"/><rect x="2" y="4" width="1" height="1" fill="#fff"/><rect x="3" y="4" width="1" height="1" fill="#fff"/><rect x="4" y="4" width="1" height="1" fill="#fff"/><rect x="5" y="4" width="1" height="1" fill="#fff"/><rect x="6" y="4" width="1" height="1" fill="#000"/><rect x="7" y="4" width="1" height="1" fill="#000"/><rect x="8" y="4" width="1" height="1" fill="#000"/><rect x="9" y="4" width="1" height="1" fill="#000"/><rect x="10" y="4" width="1" height="1" fill="#fff"/><rect x="11" y="4" width="1" height="1" fill="#fff"/><rect x="12" y="4" width="1" height="1" fill="#000"/><rect x="1" y="5" width="1" height="1" fill="#000"/><rect x="2" y="5" width="1" height="1" fill="#fff"/><rect x="3" y="5" width="1" height="1" fill="#fff"/><rect x="4" y="5" width="1" height="1" fill="#fff"/><rect x="5" y="5" width="1" height="1" fill="#fff"/><rect x="6" y="5" width="1" height="1" fill="#000"/><rect x="10" y="5" width="1" height="1" fill="#000"/><rect x="11" y="5" width="1" height="1" fill="#fff"/><rect x="12" y="5" width="1" height="1" fill="#fff"/><rect x="13" y="5" width="1" height="1" fill="#000"/><rect x="1" y="6" width="1" height="1" fill="#000"/><rect x="2" y="6" width="1" height="1" fill="#fff"/><rect x="3" y="6" width="1" height="1" fill="#fff"/><rect x="4" y="6" width="1" height="1" fill="#fff"/><rect x="5" y="6" width="1" height="1" fill="#fff"/><rect x="6" y="6" width="1" height="1" fill="#fff"/><rect x="7" y="6" width="1" height="1" fill="#000"/><rect x="10" y="6" width="1" height="1" fill="#000"/><rect x="11" y="6" width="1" height="1" fill="#fff"/><rect x="12" y="6" width="1" height="1" fill="#fff"/><rect x="13" y="6" width="1" height="1" fill="#000"/><rect x="1" y="7" width="1" height="1" fill="#000"/><rect x="2" y="7" width="1" height="1" fill="#000"/><rect x="3" y="7" width="1" height="1" fill="#000"/><rect x="4" y="7" width="1" height="1" fill="#000"/><rect x="5" y="7" width="1" height="1" fill="#000"/><rect x="6" y="7" width="1" height="1" fill="#000"/><rect x="7" y="7" width="1" height="1" fill="#000"/><rect x="10" y="7" width="1" height="1" fill="#000"/><rect x="11" y="7" width="1" height="1" fill="#fff"/><rect x="12" y="7" width="1" height="1" fill="#fff"/><rect x="13" y="7" width="1" height="1" fill="#000"/><rect x="2" y="8" width="1" height="1" fill="#000"/><rect x="3" y="8" width="1" height="1" fill="#000"/><rect x="4" y="8" width="1" height="1" fill="#fff"/><rect x="10" y="8" width="1" height="1" fill="#000"/><rect x="11" y="8" width="1" height="1" fill="#fff"/><rect x="12" y="8" width="1" height="1" fill="#fff"/><rect x="13" y="8" width="1" height="1" fill="#000"/><rect x="2" y="9" width="1" height="1" fill="#000"/><rect x="3" y="9" width="1" height="1" fill="#fff"/><rect x="4" y="9" width="1" height="1" fill="#000"/><rect x="10" y="9" width="1" height="1" fill="#000"/><rect x="11" y="9" width="1" height="1" fill="#fff"/><rect x="12" y="9" width="1" height="1" fill="#fff"/><rect x="13" y="9" width="1" height="1" fill="#000"/><rect x="2" y="10" width="1" height="1" fill="#000"/><rect x="3" y="10" width="1" height="1" fill="#fff"/><rect x="4" y="10" width="1" height="1" fill="#fff"/><rect x="5" y="10" width="1" height="1" fill="#000"/><rect x="6" y="10" width="1" height="1" fill="#000"/><rect x="7" y="10" width="1" height="1" fill="#000"/><rect x="8" y="10" width="1" height="1" fill="#000"/><rect x="9" y="10" width="1" height="1" fill="#000"/><rect x="10" y="10" width="1" height="1" fill="#fff"/><rect x="11" y="10" width="1" height="1" fill="#fff"/><rect x="12" y="10" width="1" height="1" fill="#000"/><rect x="3" y="11" width="1" height="1" fill="#000"/><rect x="4" y="11" width="1" height="1" fill="#fff"/><rect x="5" y="11" width="1" height="1" fill="#fff"/><rect x="6" y="11" width="1" height="1" fill="#fff"/><rect x="7" y="11" width="1" height="1" fill="#fff"/><rect x="8" y="11" width="1" height="1" fill="#fff"/><rect x="9" y="11" width="1" height="1" fill="#fff"/><rect x="10" y="11" width="1" height="1" fill="#fff"/><rect x="11" y="11" width="1" height="1" fill="#fff"/><rect x="12" y="11" width="1" height="1" fill="#000"/><rect x="4" y="12" width="1" height="1" fill="#000"/><rect x="5" y="12" width="1" height="1" fill="#fff"/><rect x="6" y="12" width="1" height="1" fill="#fff"/><rect x="7" y="12" width="1" height="1" fill="#fff"/><rect x="8" y="12" width="1" height="1" fill="#fff"/><rect x="9" y="12" width="1" height="1" fill="#fff"/><rect x="10" y="12" width="1" height="1" fill="#000"/><rect x="11" y="12" width="1" height="1" fill="#000"/><rect x="5" y="13" width="1" height="1" fill="#000"/><rect x="6" y="13" width="1" height="1" fill="#000"/><rect x="7" y="13" width="1" height="1" fill="#000"/><rect x="8" y="13" width="1" height="1" fill="#000"/><rect x="9" y="13" width="1" height="1" fill="#000"/></svg>
<!-- redo -->
<svg class="a" style="left:318px;top:75px" width="16" height="16" shape-rendering="crispEdges"><rect x="13" y="1" width="1" height="1" fill="#000"/><rect x="12" y="1" width="1" height="1" fill="#000"/><rect x="9" y="1" width="1" height="1" fill="#000"/><rect x="8" y="1" width="1" height="1" fill="#000"/><rect x="7" y="1" width="1" height="1" fill="#000"/><rect x="6" y="1" width="1" height="1" fill="#000"/><rect x="5" y="1" width="1" height="1" fill="#000"/><rect x="13" y="2" width="1" height="1" fill="#000"/><rect x="12" y="2" width="1" height="1" fill="#fff"/><rect x="11" y="2" width="1" height="1" fill="#000"/><rect x="10" y="2" width="1" height="1" fill="#000"/><rect x="9" y="2" width="1" height="1" fill="#fff"/><rect x="8" y="2" width="1" height="1" fill="#fff"/><rect x="7" y="2" width="1" height="1" fill="#fff"/><rect x="6" y="2" width="1" height="1" fill="#fff"/><rect x="5" y="2" width="1" height="1" fill="#fff"/><rect x="4" y="2" width="1" height="1" fill="#000"/><rect x="3" y="2" width="1" height="1" fill="#000"/><rect x="13" y="3" width="1" height="1" fill="#000"/><rect x="12" y="3" width="1" height="1" fill="#fff"/><rect x="11" y="3" width="1" height="1" fill="#fff"/><rect x="10" y="3" width="1" height="1" fill="#fff"/><rect x="9" y="3" width="1" height="1" fill="#fff"/><rect x="8" y="3" width="1" height="1" fill="#fff"/><rect x="7" y="3" width="1" height="1" fill="#fff"/><rect x="6" y="3" width="1" height="1" fill="#fff"/><rect x="5" y="3" width="1" height="1" fill="#fff"/><rect x="4" y="3" width="1" height="1" fill="#fff"/><rect x="3" y="3" width="1" height="1" fill="#fff"/><rect x="2" y="3" width="1" height="1" fill="#000"/><rect x="13" y="4" width="1" height="1" fill="#000"/><rect x="12" y="4" width="1" height="1" fill="#fff"/><rect x="11" y="4" width="1" height="1" fill="#fff"/><rect x="10" y="4" width="1" height="1" fill="#fff"/><rect x="9" y="4" width="1" height="1" fill="#fff"/><rect x="8" y="4" width="1" height="1" fill="#000"/><rect x="7" y="4" width="1" height="1" fill="#000"/><rect x="6" y="4" width="1" height="1" fill="#000"/><rect x="5" y="4" width="1" height="1" fill="#000"/><rect x="4" y="4" width="1" height="1" fill="#fff"/><rect x="3" y="4" width="1" height="1" fill="#fff"/><rect x="2" y="4" width="1" height="1" fill="#000"/><rect x="13" y="5" width="1" height="1" fill="#000"/><rect x="12" y="5" width="1" height="1" fill="#fff"/><rect x="11" y="5" width="1" height="1" fill="#fff"/><rect x="10" y="5" width="1" height="1" fill="#fff"/><rect x="9" y="5" width="1" height="1" fill="#fff"/><rect x="8" y="5" width="1" height="1" fill="#000"/><rect x="4" y="5" width="1" height="1" fill="#000"/><rect x="3" y="5" width="1" height="1" fill="#fff"/><rect x="2" y="5" width="1" height="1" fill="#fff"/><rect x="1" y="5" width="1" height="1" fill="#000"/><rect x="13" y="6" width="1" height="1" fill="#000"/><rect x="12" y="6" width="1" height="1" fill="#fff"/><rect x="11" y="6" width="1" height="1" fill="#fff"/><rect x="10" y="6" width="1" height="1" fill="#fff"/><rect x="9" y="6" width="1" height="1" fill="#fff"/><rect x="8" y="6" width="1" height="1" fill="#fff"/><rect x="7" y="6" width="1" height="1" fill="#000"/><rect x="4" y="6" width="1" height="1" fill="#000"/><rect x="3" y="6" width="1" height="1" fill="#fff"/><rect x="2" y="6" width="1" height="1" fill="#fff"/><rect x="1" y="6" width="1" height="1" fill="#000"/><rect x="13" y="7" width="1" height="1" fill="#000"/><rect x="12" y="7" width="1" height="1" fill="#000"/><rect x="11" y="7" width="1" height="1" fill="#000"/><rect x="10" y="7" width="1" height="1" fill="#000"/><rect x="9" y="7" width="1" height="1" fill="#000"/><rect x="8" y="7" width="1" height="1" fill="#000"/><rect x="7" y="7" width="1" height="1" fill="#000"/><rect x="4" y="7" width="1" height="1" fill="#000"/><rect x="3" y="7" width="1" height="1" fill="#fff"/><rect x="2" y="7" width="1" height="1" fill="#fff"/><rect x="1" y="7" width="1" height="1" fill="#000"/><rect x="12" y="8" width="1" height="1" fill="#000"/><rect x="11" y="8" width="1" height="1" fill="#000"/><rect x="10" y="8" width="1" height="1" fill="#fff"/><rect x="4" y="8" width="1" height="1" fill="#000"/><rect x="3" y="8" width="1" height="1" fill="#fff"/><rect x="2" y="8" width="1" height="1" fill="#fff"/><rect x="1" y="8" width="1" height="1" fill="#000"/><rect x="12" y="9" width="1" height="1" fill="#000"/><rect x="11" y="9" width="1" height="1" fill="#fff"/><rect x="10" y="9" width="1" height="1" fill="#000"/><rect x="4" y="9" width="1" height="1" fill="#000"/><rect x="3" y="9" width="1" height="1" fill="#fff"/><rect x="2" y="9" width="1" height="1" fill="#fff"/><rect x="1" y="9" width="1" height="1" fill="#000"/><rect x="12" y="10" width="1" height="1" fill="#000"/><rect x="11" y="10" width="1" height="1" fill="#fff"/><rect x="10" y="10" width="1" height="1" fill="#fff"/><rect x="9" y="10" width="1" height="1" fill="#000"/><rect x="8" y="10" width="1" height="1" fill="#000"/><rect x="7" y="10" width="1" height="1" fill="#000"/><rect x="6" y="10" width="1" height="1" fill="#000"/><rect x="5" y="10" width="1" height="1" fill="#000"/><rect x="4" y="10" width="1" height="1" fill="#fff"/><rect x="3" y="10" width="1" height="1" fill="#fff"/><rect x="2" y="10" width="1" height="1" fill="#000"/><rect x="11" y="11" width="1" height="1" fill="#000"/><rect x="10" y="11" width="1" height="1" fill="#fff"/><rect x="9" y="11" width="1" height="1" fill="#fff"/><rect x="8" y="11" width="1" height="1" fill="#fff"/><rect x="7" y="11" width="1" height="1" fill="#fff"/><rect x="6" y="11" width="1" height="1" fill="#fff"/><rect x="5" y="11" width="1" height="1" fill="#fff"/><rect x="4" y="11" width="1" height="1" fill="#fff"/><rect x="3" y="11" width="1" height="1" fill="#fff"/><rect x="2" y="11" width="1" height="1" fill="#000"/><rect x="10" y="12" width="1" height="1" fill="#000"/><rect x="9" y="12" width="1" height="1" fill="#fff"/><rect x="8" y="12" width="1" height="1" fill="#fff"/><rect x="7" y="12" width="1" height="1" fill="#fff"/><rect x="6" y="12" width="1" height="1" fill="#fff"/><rect x="5" y="12" width="1" height="1" fill="#fff"/><rect x="4" y="12" width="1" height="1" fill="#000"/><rect x="3" y="12" width="1" height="1" fill="#000"/><rect x="9" y="13" width="1" height="1" fill="#000"/><rect x="8" y="13" width="1" height="1" fill="#000"/><rect x="7" y="13" width="1" height="1" fill="#000"/><rect x="6" y="13" width="1" height="1" fill="#000"/><rect x="5" y="13" width="1" height="1" fill="#000"/></svg>
<!-- table -->
<svg class="a" style="left:345px;top:75px" width="17" height="17" shape-rendering="crispEdges">
<rect x="1" y="1" width="15" height="15" fill="#000"/><rect x="2" y="2" width="13" height="13" fill="#dcdcdc"/>
<g fill="#a0a0a0"><rect x="5" y="2" width="1" height="13"/><rect x="10" y="2" width="1" height="13"/><rect x="2" y="5" width="13" height="1"/><rect x="2" y="8" width="13" height="1"/><rect x="2" y="11" width="13" height="1"/></g>
</svg>
<!-- palette -->
<svg class="a" style="left:366px;top:76px" width="18" height="17">
<path d="M4 1.5C8 0.5 13 1 15.5 4C17 6 17 10 16 13C15 15.5 12 15.5 10 14C8 12 7 10 4.5 9.5C2 9 0.8 7 1.5 5C2 3.3 3 2 4 1.5Z" fill="#d09050" stroke="#a06020" stroke-width="0.7"/>
<circle cx="3.8" cy="5" r="1.4" fill="#00e000"/>
<path d="M5.5 3.5L7 1.5L8.5 3.5Z" fill="#ffff00"/>
<rect x="9.5" y="1" width="2.5" height="3.5" fill="#ff0000"/>
<path d="M12.5 4.5L14.5 6.5L12.5 7.5Z" fill="#a000ff"/>
<rect x="12" y="8" width="3" height="2.5" fill="#0000ff"/>
<path d="M12 11.5L14.5 11.5L13 14Z" fill="#000"/>
<path d="M1 16L9.5 6.5" stroke="#c07030" stroke-width="1.5"/>
<path d="M8 8L11 4.5" stroke="#000" stroke-width="1.6"/>
<path d="M5.5 10.5L7 9" stroke="#e0f0ff" stroke-width="1.2"/>
</svg>
<!-- link -->
<svg class="a" style="left:386px;top:74px" width="20" height="18">
<g transform="rotate(45 6.6 9.6)"><rect x="4.35" y="3.3" width="4.5" height="12.6" rx="1.4" fill="none" stroke="#000" stroke-width="1.1"/></g>
<g transform="rotate(45 11.4 8.4)"><rect x="9.15" y="2.1" width="4.5" height="12.6" rx="1.4" fill="none" stroke="#000" stroke-width="1.1"/></g>
<path d="M4.6 14.4L7.4 11.6M12.2 6.3L15.2 3.3" stroke="#10e010" stroke-width="1.4"/>
<circle cx="9.6" cy="9.6" r="0.9" fill="#fff"/>
</svg>
<!-- windows -->
<svg class="a" style="left:409px;top:76px" width="18" height="16" shape-rendering="crispEdges">
<rect x="1" y="1" width="13" height="11" fill="#000"/><rect x="2" y="2" width="11" height="9" fill="#d8d8d8"/>
<rect x="3" y="3" width="13" height="11" fill="#000"/><rect x="4" y="4" width="11" height="9" fill="#bcbcbc"/>
<rect x="2" y="2" width="1" height="9" fill="#fff"/><rect x="2" y="2" width="11" height="1" fill="#fff"/>
</svg>

<svg class="a" style="left:0;top:0" width="460" height="125" shape-rendering="crispEdges"><rect x="7" y="103" width="13" height="2" fill="#0000ff"/><rect x="6" y="108" width="6" height="2" fill="#000"/><rect x="6" y="111" width="15" height="1" fill="#000"/><rect x="6" y="113" width="15" height="1" fill="#000"/><rect x="6" y="115" width="15" height="1" fill="#000"/><rect x="6" y="117" width="15" height="1" fill="#000"/><rect x="6" y="112" width="15" height="1" fill="#a8a8a8"/><rect x="6" y="114" width="15" height="1" fill="#a8a8a8"/><rect x="6" y="116" width="15" height="1" fill="#a8a8a8"/><rect x="28" y="103" width="15" height="1" fill="#000"/><rect x="28" y="105" width="13" height="1" fill="#000"/><rect x="28" y="112" width="15" height="1" fill="#000"/><rect x="28" y="114" width="15" height="1" fill="#000"/><rect x="28" y="116" width="13" height="1" fill="#000"/><rect x="28" y="108" width="9" height="2" fill="#0000ff"/><rect x="50" y="103" width="15" height="1" fill="#000"/><rect x="50" y="105" width="13" height="1" fill="#000"/><rect x="50" y="114" width="15" height="1" fill="#000"/><rect x="50" y="116" width="15" height="1" fill="#000"/><rect x="52" y="109" width="4" height="1" fill="#0000ff"/><rect x="57" y="109" width="8" height="1" fill="#0000ff"/><rect x="52" y="111" width="13" height="1" fill="#0000ff"/><rect x="52" y="110" width="13" height="1" fill="#a0a0ff"/><rect x="72" y="103" width="15" height="1" fill="#000"/><rect x="72" y="105" width="9" height="1" fill="#000"/><rect x="72" y="107" width="11" height="1" fill="#000"/><rect x="80" y="113" width="7" height="1" fill="#000"/><rect x="76" y="115" width="11" height="1" fill="#000"/><rect x="78" y="117" width="9" height="1" fill="#000"/><rect x="74" y="110" width="12" height="1" fill="#0000ff"/><rect x="75" y="109" width="1" height="3" fill="#0000ff"/><rect x="84" y="109" width="1" height="3" fill="#0000ff"/><rect x="94" y="103" width="15" height="1" fill="#000"/><rect x="94" y="105" width="15" height="1" fill="#000"/><rect x="101" y="108" width="8" height="1" fill="#000"/><rect x="101" y="110" width="8" height="1" fill="#000"/><rect x="101" y="112" width="8" height="1" fill="#000"/><rect x="94" y="114" width="15" height="1" fill="#000"/><rect x="94" y="116" width="15" height="1" fill="#000"/><rect x="94" y="110" width="7" height="1" fill="#0000ff"/><rect x="95" y="109" width="1" height="3" fill="#0000ff"/><rect x="99" y="109" width="1" height="3" fill="#0000ff"/><rect x="116" y="103" width="15" height="1" fill="#000"/><rect x="116" y="111" width="15" height="1" fill="#000"/><rect x="116" y="113" width="15" height="1" fill="#000"/><rect x="118" y="106" width="12" height="4" fill="#0000ff"/><rect x="119" y="107" width="10" height="2" fill="#a8a8ff"/><rect x="116" y="116" width="2" height="1" fill="#0000ff"/><rect x="119" y="116" width="12" height="1" fill="#0000ff"/><rect x="138" y="103" width="11" height="1" fill="#000"/><rect x="140" y="105" width="6" height="1" fill="#000"/><rect x="140" y="107" width="8" height="1" fill="#000"/><rect x="142" y="109" width="7" height="1" fill="#000"/><rect x="140" y="111" width="8" height="1" fill="#000"/><rect x="138" y="113" width="11" height="1" fill="#000"/><rect x="140" y="115" width="7" height="1" fill="#000"/><rect x="140" y="117" width="9" height="1" fill="#000"/><rect x="151" y="103" width="2" height="1" fill="#000"/><rect x="151" y="105" width="2" height="1" fill="#000"/><rect x="151" y="107" width="2" height="1" fill="#000"/><rect x="151" y="109" width="2" height="1" fill="#000"/><rect x="151" y="111" width="2" height="1" fill="#000"/><rect x="151" y="113" width="2" height="1" fill="#000"/><rect x="151" y="115" width="2" height="1" fill="#000"/><rect x="151" y="117" width="2" height="1" fill="#000"/><rect x="160" y="100" width="1" height="22" fill="#808080"/><rect x="161" y="100" width="1" height="22" fill="#fff"/><rect x="232" y="100" width="1" height="22" fill="#808080"/><rect x="233" y="100" width="1" height="22" fill="#fff"/><rect x="278" y="100" width="1" height="22" fill="#808080"/><rect x="279" y="100" width="1" height="22" fill="#fff"/><path d="M167.5 101.5L170 104.5L167.5 107.5L165 104.5Z" fill="#000" shape-rendering="auto"/><rect x="172" y="104" width="10" height="2" fill="#000"/><path d="M167.5 107.5L170 110.5L167.5 113.5L165 110.5Z" fill="#000" shape-rendering="auto"/><rect x="172" y="110" width="10" height="2" fill="#000"/><path d="M167.5 113.5L170 116.5L167.5 119.5L165 116.5Z" fill="#000" shape-rendering="auto"/><rect x="172" y="116" width="10" height="2" fill="#000"/><rect x="193" y="104" width="10" height="1" fill="#000"/><rect x="193" y="110" width="10" height="1" fill="#000"/><rect x="193" y="116" width="10" height="1" fill="#000"/><rect x="219" y="104" width="7" height="1" fill="#000"/><rect x="216" y="110" width="10" height="1" fill="#000"/><rect x="221" y="116" width="5" height="1" fill="#000"/></svg>
<svg class="a" style="left:0;top:0" width="230" height="125" shape-rendering="crispEdges"><g fill="#000"><rect x="189" y="102" width="1" height="1"/><rect x="190" y="102" width="1" height="1"/><rect x="188" y="103" width="1" height="1"/><rect x="189" y="103" width="1" height="1"/><rect x="190" y="103" width="1" height="1"/><rect x="189" y="104" width="1" height="1"/><rect x="190" y="104" width="1" height="1"/><rect x="189" y="105" width="1" height="1"/><rect x="190" y="105" width="1" height="1"/><rect x="188" y="106" width="1" height="1"/><rect x="189" y="106" width="1" height="1"/><rect x="190" y="106" width="1" height="1"/><rect x="191" y="106" width="1" height="1"/><rect x="189" y="108" width="1" height="1"/><rect x="190" y="108" width="1" height="1"/><rect x="191" y="108" width="1" height="1"/><rect x="188" y="109" width="1" height="1"/><rect x="191" y="109" width="1" height="1"/><rect x="192" y="109" width="1" height="1"/><rect x="190" y="110" width="1" height="1"/><rect x="191" y="110" width="1" height="1"/><rect x="189" y="111" width="1" height="1"/><rect x="190" y="111" width="1" height="1"/><rect x="188" y="112" width="1" height="1"/><rect x="189" y="112" width="1" height="1"/><rect x="190" y="112" width="1" height="1"/><rect x="191" y="112" width="1" height="1"/><rect x="192" y="112" width="1" height="1"/><rect x="188" y="114" width="1" height="1"/><rect x="189" y="114" width="1" height="1"/><rect x="190" y="114" width="1" height="1"/><rect x="191" y="114" width="1" height="1"/><rect x="191" y="115" width="1" height="1"/><rect x="192" y="115" width="1" height="1"/><rect x="189" y="116" width="1" height="1"/><rect x="190" y="116" width="1" height="1"/><rect x="191" y="116" width="1" height="1"/><rect x="191" y="117" width="1" height="1"/><rect x="192" y="117" width="1" height="1"/><rect x="188" y="118" width="1" height="1"/><rect x="189" y="118" width="1" height="1"/><rect x="190" y="118" width="1" height="1"/><rect x="191" y="118" width="1" height="1"/><rect x="211" y="102" width="1" height="1"/><rect x="212" y="102" width="1" height="1"/><rect x="213" y="102" width="1" height="1"/><rect x="210" y="103" width="1" height="1"/><rect x="211" y="103" width="1" height="1"/><rect x="210" y="104" width="1" height="1"/><rect x="211" y="104" width="1" height="1"/><rect x="213" y="104" width="1" height="1"/><rect x="214" y="104" width="1" height="1"/><rect x="210" y="105" width="1" height="1"/><rect x="211" y="105" width="1" height="1"/><rect x="214" y="105" width="1" height="1"/><rect x="211" y="106" width="1" height="1"/><rect x="212" y="106" width="1" height="1"/><rect x="213" y="106" width="1" height="1"/><rect x="214" y="106" width="1" height="1"/><rect x="215" y="102" width="1" height="1"/><rect x="216" y="102" width="1" height="1"/><rect x="217" y="102" width="1" height="1"/><rect x="218" y="102" width="1" height="1"/><rect x="216" y="103" width="1" height="1"/><rect x="217" y="103" width="1" height="1"/><rect x="216" y="104" width="1" height="1"/><rect x="217" y="104" width="1" height="1"/><rect x="216" y="105" width="1" height="1"/><rect x="217" y="105" width="1" height="1"/><rect x="216" y="106" width="1" height="1"/><rect x="217" y="106" width="1" height="1"/><rect x="210" y="108" width="1" height="1"/><rect x="211" y="108" width="1" height="1"/><rect x="214" y="108" width="1" height="1"/><rect x="210" y="109" width="1" height="1"/><rect x="211" y="109" width="1" height="1"/><rect x="212" y="109" width="1" height="1"/><rect x="214" y="109" width="1" height="1"/><rect x="210" y="110" width="1" height="1"/><rect x="211" y="110" width="1" height="1"/><rect x="213" y="110" width="1" height="1"/><rect x="214" y="110" width="1" height="1"/><rect x="210" y="111" width="1" height="1"/><rect x="211" y="111" width="1" height="1"/><rect x="214" y="111" width="1" height="1"/><rect x="210" y="112" width="1" height="1"/><rect x="211" y="112" width="1" height="1"/><rect x="214" y="112" width="1" height="1"/><rect x="210" y="114" width="1" height="1"/><rect x="211" y="114" width="1" height="1"/><rect x="214" y="114" width="1" height="1"/><rect x="210" y="115" width="1" height="1"/><rect x="211" y="115" width="1" height="1"/><rect x="214" y="115" width="1" height="1"/><rect x="210" y="116" width="1" height="1"/><rect x="211" y="116" width="1" height="1"/><rect x="214" y="116" width="1" height="1"/><rect x="210" y="117" width="1" height="1"/><rect x="211" y="117" width="1" height="1"/><rect x="214" y="117" width="1" height="1"/><rect x="211" y="118" width="1" height="1"/><rect x="212" y="118" width="1" height="1"/><rect x="213" y="118" width="1" height="1"/><rect x="215" y="114" width="1" height="1"/><rect x="219" y="114" width="1" height="1"/><rect x="215" y="115" width="1" height="1"/><rect x="216" y="115" width="1" height="1"/><rect x="218" y="115" width="1" height="1"/><rect x="219" y="115" width="1" height="1"/><rect x="215" y="116" width="1" height="1"/><rect x="217" y="116" width="1" height="1"/><rect x="219" y="116" width="1" height="1"/><rect x="215" y="117" width="1" height="1"/><rect x="217" y="117" width="1" height="1"/><rect x="219" y="117" width="1" height="1"/><rect x="215" y="118" width="1" height="1"/><rect x="219" y="118" width="1" height="1"/></g></svg>

<!-- sigma -->
<svg class="a" style="left:237px;top:102px" width="18" height="18">
<rect x="1" y="5" width="8.5" height="8.5" fill="#80c8c8"/>
<path d="M2.5 7L6 9.5L2.5 12.5H8" fill="none" stroke="#000" stroke-width="1.1"/>
<path d="M2.5 7H8" stroke="#000" stroke-width="1"/>
<rect x="9.5" y="1.5" width="6" height="7" fill="#40c070" stroke="#208040" stroke-width="0.8"/>
<path d="M11 3.5V6.5M13.5 3.5V6.5M11 4H14" stroke="#000" stroke-width="0.8"/>
<rect x="9.5" y="10.5" width="5.5" height="6" fill="#f0b0f0" stroke="#a070a0" stroke-width="0.7"/>
<path d="M12 12H13.5M12 12V15" stroke="#000" stroke-width="0.9"/>
</svg>
<!-- monitor -->
<svg class="a" style="left:256px;top:102px" width="19" height="18">
<rect x="1.5" y="0.8" width="14.5" height="12" fill="#f4f4f4" stroke="#c8c8c8" stroke-width="0.8"/>
<rect x="3.2" y="2.2" width="11" height="9" fill="#5c5494"/>
<rect x="4" y="3" width="9.5" height="3" fill="#6a62a0"/>
<rect x="15.6" y="0" width="1.5" height="13" fill="#404060"/>
<path d="M1.5 13.6H17" stroke="#909090" stroke-width="1.2"/>
<path d="M4 16.3H15" stroke="#111" stroke-width="1.2"/>
<path d="M6 14.8H13" stroke="#b8b8b8" stroke-width="1"/>
</svg>
<div class="a" style="left:284.5px;top:101.5px;font:italic 19px/20px 'Liberation Serif',serif;color:#000">E</div>
<div class="a" style="left:303px;top:101.5px;font:bold 18px/20px 'Liberation Serif',serif;color:#000">S</div>
<div class="a" style="left:319.5px;top:101.5px;font:18px/20px 'Liberation Serif',serif;color:#000;transform:scaleX(0.75);transform-origin:0 0">V</div>
<div class="a" style="left:336px;top:101.5px;font:18px/20px 'Liberation Serif',serif;color:#000">S</div>
<div class="a" style="left:351px;top:101.5px;font:18px/20px 'Liberation Serif',serif;color:#000;white-space:pre">N<span style="font-size:13px">A</span></div>
<!-- color grid -->
<svg class="a" style="left:376px;top:102px" width="20" height="18" shape-rendering="crispEdges">
<rect x="1" y="1" width="18" height="16" fill="#202020"/>
<rect x="2" y="2" width="5" height="4" fill="#a83058"/><rect x="8" y="2" width="5" height="4" fill="#50a088"/><rect x="14" y="2" width="4" height="4" fill="#30a0a0"/>
<rect x="2" y="7" width="5" height="4" fill="#e07040"/><rect x="8" y="7" width="5" height="4" fill="#b0e0c0"/><rect x="14" y="7" width="4" height="4" fill="#80e0e0"/>
<rect x="2" y="12" width="5" height="4" fill="#f8e080"/><rect x="8" y="12" width="5" height="4" fill="#c8e8d0"/><rect x="14" y="12" width="4" height="4" fill="#b0f0e8"/>
<path d="M6 17C6.5 14.5 8 12.5 9.5 11.5L13.6 6C14.2 5.3 15 5.6 14.8 6.4L12 11.5C13 11.3 13.8 11.8 13.6 12.6L12.6 17Z" fill="#dcb888" stroke="#a88050" stroke-width="0.5" shape-rendering="auto"/><path d="M9 13.5L11.5 12.5M9.5 15L12 14" stroke="#b89060" stroke-width="0.6" shape-rendering="auto"/>
</svg>

<div class="a" style="left:5.09px;top:32.00px;font:16px 'Liberation Serif',serif;line-height:50px;white-space:pre;color:#000;transform:scaleX(1.0178);transform-origin:0 0">Fichero</div>
<div class="a" style="left:65.06px;top:32.00px;font:16px 'Liberation Serif',serif;line-height:50px;white-space:pre;color:#000;transform:scaleX(1.0753);transform-origin:0 0">Editar</div>
<div class="a" style="left:118.87px;top:32.00px;font:16px 'Liberation Serif',serif;line-height:50px;white-space:pre;color:#000;transform:scaleX(1.0591);transform-origin:0 0">Insertar</div>
<div class="a" style="left:183.14px;top:32.00px;font:16px 'Liberation Serif',serif;line-height:50px;white-space:pre;color:#000;transform:scaleX(1.0468);transform-origin:0 0">Texto</div>
<div class="a" style="left:230.78px;top:32.00px;font:16px 'Liberation Serif',serif;line-height:50px;white-space:pre;color:#000;transform:scaleX(1.0310);transform-origin:0 0">Formato</div>
<div class="a" style="left:297.99px;top:32.00px;font:16px 'Liberation Serif',serif;line-height:50px;white-space:pre;color:#000;transform:scaleX(1.0204);transform-origin:0 0">Documento</div>
<div class="a" style="left:384.94px;top:32.00px;font:16px 'Liberation Serif',serif;line-height:50px;white-space:pre;color:#000;transform:scaleX(1.0483);transform-origin:0 0">Ver</div>
<div class="a" style="left:419.09px;top:32.00px;font:16px 'Liberation Serif',serif;line-height:50px;white-space:pre;color:#000;transform:scaleX(1.0300);transform-origin:0 0">Ir</div>
<div class="a" style="left:442.49px;top:32.00px;font:16px 'Liberation Serif',serif;line-height:50px;white-space:pre;color:#000;transform:scaleX(1.0282);transform-origin:0 0">Herramientas</div>
<div class="a" style="left:542.24px;top:32.00px;font:16px 'Liberation Serif',serif;line-height:50px;white-space:pre;color:#000;transform:scaleX(1.0282);transform-origin:0 0">Ayuda</div>

<!-- document -->
<div id="doc" class="a" style="left:0;top:125px;width:756px;height:594px;background:#fff;border-left:1px solid #6e6e6e"></div>
<div id="gray" class="a" style="left:756px;top:125px;width:268px;height:594px;background:#d0d0d0"></div>
<div class="a" style="left:0;top:719px;width:1024px;height:1px;background:#6e6e6e"></div>
<div class="a" style="left:1023px;top:124px;width:1px;height:596px;background:#6e6e6e"></div>
<div class="a" style="left:1022px;top:125px;width:1px;height:594px;background:#dadada"></div>





<!-- doc texts -->
<div class="a" style="left:23.09px;top:344.20px;font:bold 25px 'Liberation Serif',serif;line-height:50px;white-space:pre;color:#000;transform:scaleX(1.1027);transform-origin:0 0">1</div>
<div class="a" style="left:54.21px;top:344.20px;font:bold 25px 'Liberation Serif',serif;line-height:50px;white-space:pre;color:#000;transform:scaleX(1.0536);transform-origin:0 0">Introducción</div>
<div class="a" style="left:209.70px;top:344.20px;font:bold 25px 'Liberation Serif',serif;line-height:50px;white-space:pre;color:#000;transform:scaleX(1.0685);transform-origin:0 0">al</div>
<div class="a" style="left:238.90px;top:344.20px;font:bold 25px 'Liberation Serif',serif;line-height:50px;white-space:pre;color:#000;transform:scaleX(1.0702);transform-origin:0 0">cáculo</div>
<div class="a" style="left:320.88px;top:344.20px;font:bold 25px 'Liberation Serif',serif;line-height:50px;white-space:pre;color:#000;transform:scaleX(1.0375);transform-origin:0 0">integral.</div>
<div class="a" style="left:271.39px;top:182.00px;font:bold 31px 'Liberation Serif',serif;line-height:50px;white-space:pre;color:#000;transform:scaleX(1.0051);transform-origin:0 0">Cálculo</div>
<div class="a" style="left:382.86px;top:182.00px;font:bold 31px 'Liberation Serif',serif;line-height:50px;white-space:pre;color:#000;transform:scaleX(0.9912);transform-origin:0 0">integral</div>
<div class="a" style="left:329.51px;top:223.70px;font:13px 'Liberation Serif',serif;line-height:50px;white-space:pre;color:#000;transform:scaleX(1.1600);transform-origin:0 0">POR</div>
<div class="a" style="left:366.63px;top:223.70px;font:13px 'Liberation Serif',serif;line-height:50px;white-space:pre;color:#000;transform:scaleX(1.0643);transform-origin:0 0">KAHUNA</div>
<!-- status -->
<div id="status" class="a" style="left:0;top:720px;width:1024px;height:20px;background:#d0d0d0"></div>



<div class="a" style="left:4.23px;top:704.50px;font:14.5px 'Liberation Serif',serif;line-height:50px;white-space:pre;color:#000;transform:scaleX(1.1422);transform-origin:0 0">artículo</div>
<div class="a" style="left:59.71px;top:704.50px;font:14.5px 'Liberation Serif',serif;line-height:50px;white-space:pre;color:#000;transform:scaleX(1.1681);transform-origin:0 0">texto</div>
<div class="a" style="left:99.42px;top:704.50px;font:14.5px 'Liberation Serif',serif;line-height:50px;white-space:pre;color:#000;transform:scaleX(1.1068);transform-origin:0 0">roman</div>
<div class="a" style="left:145.25px;top:704.50px;font:14.5px 'Liberation Serif',serif;line-height:50px;white-space:pre;color:#000;transform:scaleX(1.0769);transform-origin:0 0">14</div>
<div class="a" style="left:166.22px;top:704.50px;font:14.5px 'Liberation Serif',serif;line-height:50px;white-space:pre;color:#000;transform:scaleX(1.1346);transform-origin:0 0">negrita</div>
<div class="a" style="left:962.46px;top:704.80px;font:14.5px 'Liberation Serif',serif;line-height:50px;white-space:pre;color:#000;transform:scaleX(1.0737);transform-origin:0 0">sección</div>
<div class="a" style="left:1013.90px;top:704.80px;font:14.5px 'Liberation Serif',serif;line-height:50px;white-space:pre;color:#000;transform:scaleX(1);transform-origin:0 0">.</div>
<!-- taskbar -->
<div class="a" style="left:0;top:740px;width:1024px;height:1px;background:#ffffff"></div>
<div id="task" class="a" style="left:0;top:741px;width:1024px;height:27px;background:#dcdad5"></div>


<!-- show desktop button -->
<div class="a" style="left:0;top:741px;width:1px;height:27px;background:#fff"></div>
<div class="a" style="left:3px;top:743px;width:31px;height:22px;background:#dcdad5;border-top:1px solid #fff;border-left:1px solid #fff;border-right:1px solid #000;border-bottom:1px solid #000"></div>
<svg class="a" style="left:9px;top:747px" width="22" height="17">
<path d="M3 2.5H18L20 12.5H1Z" fill="#4a3a6a" stroke="#2a2040" stroke-width="0.8"/>
<rect x="5" y="4" width="7" height="7" fill="#f4f4f4"/>
<path d="M6.5 5.5L9 7L7 9" stroke="#888" stroke-width="0.8" fill="none"/>
<path d="M2 2L4 4M19 2L17 4M1 12L4 10M20 12L17 10" stroke="#d8d0b0" stroke-width="1"/>
<path d="M7.2 14.5L14.5 8" stroke="#b05000" stroke-width="3.2" stroke-linecap="round"/>
<path d="M7.2 14.3L14.5 7.8" stroke="#f09020" stroke-width="1.8" stroke-linecap="round"/>
</svg>
<!-- handle -->
<div class="a" style="left:35px;top:742px;width:10px;height:24px;background:#dcdad5;border-left:1px solid #fff;border-right:1px solid #000;border-bottom:1px solid #000"></div>
<svg class="a" style="left:36px;top:744px" width="8" height="20" shape-rendering="crispEdges">
<rect x="1" y="1" width="2" height="2" fill="#fff"/><rect x="2" y="2" width="1" height="1" fill="#9a9890"/><rect x="4" y="1" width="2" height="2" fill="#fff"/><rect x="5" y="2" width="1" height="1" fill="#9a9890"/><rect x="1" y="4" width="2" height="2" fill="#fff"/><rect x="2" y="5" width="1" height="1" fill="#9a9890"/><rect x="4" y="4" width="2" height="2" fill="#fff"/><rect x="5" y="5" width="1" height="1" fill="#9a9890"/><rect x="1" y="7" width="2" height="2" fill="#fff"/><rect x="2" y="8" width="1" height="1" fill="#9a9890"/><rect x="4" y="7" width="2" height="2" fill="#fff"/><rect x="5" y="8" width="1" height="1" fill="#9a9890"/><rect x="1" y="10" width="2" height="2" fill="#fff"/><rect x="2" y="11" width="1" height="1" fill="#9a9890"/><rect x="4" y="10" width="2" height="2" fill="#fff"/><rect x="5" y="11" width="1" height="1" fill="#9a9890"/><rect x="1" y="13" width="2" height="2" fill="#fff"/><rect x="2" y="14" width="1" height="1" fill="#9a9890"/><rect x="4" y="13" width="2" height="2" fill="#fff"/><rect x="5" y="14" width="1" height="1" fill="#9a9890"/><rect x="1" y="16" width="2" height="2" fill="#fff"/><rect x="2" y="17" width="1" height="1" fill="#9a9890"/><rect x="4" y="16" width="2" height="2" fill="#fff"/><rect x="5" y="17" width="1" height="1" fill="#9a9890"/>
</svg>
<!-- gkrellm button -->
<div class="a" style="left:45px;top:742px;width:76px;height:24px;background:#dcdad5;border-top:1px solid #fff;border-left:1px solid #fff;border-right:1px solid #000;border-bottom:1px solid #000"></div>
<svg class="a" style="left:48px;top:745px" width="17" height="18">
<defs><linearGradient id="dg" x1="0" y1="0" x2="1" y2="1"><stop offset="0" stop-color="#ffffff"/><stop offset="1" stop-color="#c8c8c8"/></linearGradient></defs>
<path d="M1.5 2.5Q1.5 1.5 2.5 1.5H13L15 3.5V15.5Q15 16.5 14 16.5H2.5Q1.5 16.5 1.5 15.5Z" fill="url(#dg)" stroke="#4a4a4a" stroke-width="1"/>
<path d="M13 1.5L15 3.5" stroke="#222" stroke-width="1.2"/>
</svg>
<!-- no name button -->
<div class="a" style="left:121px;top:742px;width:77px;height:24px;background:#dcdad5;border-top:1px solid #fff;border-left:1px solid #fff;border-right:1px solid #000;border-bottom:1px solid #000"></div>
<svg class="a" style="left:123px;top:745px" width="18" height="18">
<rect x="1" y="1" width="16" height="16" fill="#d6d6d8"/>
<ellipse cx="8.5" cy="9.5" rx="5.5" ry="6" fill="none" stroke="#c0b0a0" stroke-width="1" opacity="0.7"/>
<path d="M5 3.5C7 2.5 9 3 11 4M12 2.5L14 4M10 14C11 15 12.5 14.5 13 13" stroke="#d8b898" stroke-width="1.3" fill="none"/>
<text x="1.3" y="10.5" font-family="Liberation Serif" font-size="8.5" fill="#333">T</text>
<text x="6" y="13.6" font-family="Liberation Serif" font-size="8.5" fill="#333">E</text>
<text x="10" y="10.5" font-family="Liberation Serif" font-size="8.5" fill="#222">X</text>
<rect x="9" y="9" width="2" height="1.5" fill="#a8a0f0"/>
</svg>
<div class="a" style="left:68.26px;top:729.75px;font:13px 'Liberation Sans',sans-serif;line-height:50px;white-space:pre;color:#000;transform:scaleX(1.0765);transform-origin:0 0">gkrellm</div>
<div class="a" style="left:139.66px;top:729.60px;font:13px 'Liberation Sans',sans-serif;line-height:50px;white-space:pre;color:#000;transform:scaleX(1.1147);transform-origin:0 0">no name</div>
<!-- bottom dark line -->
<div class="a" style="left:0;top:767px;width:1024px;height:1px;background:#1a1a1a"></div>
<!-- pager -->
<svg class="a" style="left:904px;top:740px" width="120" height="28" shape-rendering="crispEdges">
<rect x="6" y="4" width="112" height="20" fill="#a09d96"/>
<rect x="6" y="4" width="1" height="20" fill="#8a877f"/>
<rect x="7" y="4" width="111" height="1" fill="#000"/>
<rect x="7" y="4" width="1" height="20" fill="#000"/>
<rect x="6" y="23" width="112" height="1" fill="#fff"/>
<rect x="117" y="4" width="1" height="20" fill="#fff"/>
<!-- cell1 -->
<rect x="8" y="5" width="26" height="18" fill="#000"/>
<rect x="8" y="5" width="23" height="1" fill="#3a5068"/>
<rect x="9" y="7" width="24" height="14" fill="#fff"/>
<rect x="10" y="8" width="22" height="12" fill="#dcdad5"/>
<rect x="8" y="22" width="26" height="1" fill="#2a3a50"/>
<rect x="34" y="5" width="1" height="18" fill="#e8e6e0"/>
<!-- cell2 -->
<rect x="35" y="5" width="26" height="1" fill="#e8e6e0"/>
<rect x="35" y="6" width="26" height="16" fill="#000"/>
<rect x="37" y="7" width="23" height="14" fill="#fff"/>
<rect x="38" y="8" width="21" height="12" fill="#dcdad5"/>
<rect x="58" y="4" width="3" height="11" fill="#000"/><rect x="59" y="5" width="1" height="9" fill="#fff"/>
<!-- cell3 -->
<rect x="61" y="5" width="1" height="18" fill="#e8e6e0"/>
<rect x="66" y="10" width="6" height="6" fill="#000"/><rect x="67" y="11" width="4" height="1" fill="#e8e6e0"/><rect x="67" y="14" width="4" height="1" fill="#e8e6e0"/>
<rect x="73" y="10" width="6" height="8" fill="#000"/><rect x="74" y="11" width="4" height="6" fill="#dcdad5"/>
<rect x="85" y="4" width="3" height="11" fill="#000"/><rect x="86" y="5" width="1" height="9" fill="#fff"/>
<rect x="88" y="5" width="1" height="18" fill="#e8e6e0"/>
<!-- cell4 -->
<rect x="96" y="8" width="13" height="6" fill="#000"/><rect x="97" y="9" width="11" height="1" fill="#e8e6e0"/><rect x="97" y="12" width="11" height="1" fill="#e8e6e0"/>
<rect x="96" y="15" width="13" height="6" fill="#000"/><rect x="97" y="16" width="11" height="1" fill="#e8e6e0"/><rect x="97" y="19" width="11" height="1" fill="#e8e6e0"/>
<rect x="112" y="4" width="3" height="11" fill="#000"/><rect x="113" y="5" width="1" height="9" fill="#fff"/>
</svg>

</body></html>
